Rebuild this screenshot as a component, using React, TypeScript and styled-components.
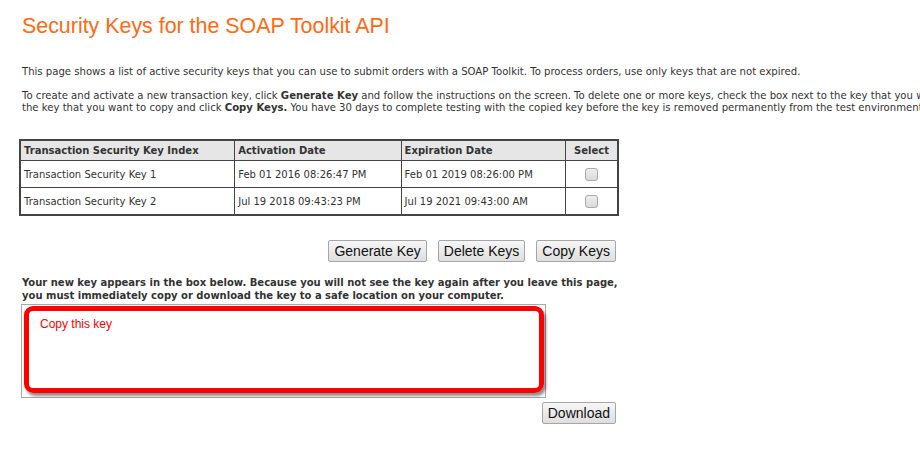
import React from "react";
import styled, { createGlobalStyle } from "styled-components";

const Global = createGlobalStyle`
  html, body { margin: 0; padding: 0; background: #fff; }
  body { font-family: "DejaVu Sans", Verdana, sans-serif; color: #333; }
`;

const Page = styled.div`
  padding: 13px 0 0 22px;
  width: 920px;
  box-sizing: border-box;
  overflow: hidden;
`;

const Title = styled.h1`
  margin: 0;
  font-family: "Liberation Sans", Arial, sans-serif;
  font-weight: normal;
  font-size: 21.4px;
  line-height: 26px;
  color: #ff6a13;
`;

const Para = styled.p<{ $top: number }>`
  margin: ${(p) => p.$top}px 0 0 0;
  font-size: 10.1px;
  line-height: 12px;
  white-space: nowrap;
  color: #333;
`;

const Table = styled.table`
  margin: 25px 0 0 -3px;
  border-collapse: collapse;
  border: 2px solid #444;
  width: 600px;
  font-size: 10px;
`;

const Th = styled.th<{ $w: number; $center?: boolean }>`
  width: ${(p) => p.$w}px;
  background: #e6e6e6;
  border: 1px solid #444;
  text-align: ${(p) => (p.$center ? "center" : "left")};
  padding: 0 3px;
  height: 19px;
  font-weight: bold;
  color: #333;
`;

const Td = styled.td<{ $center?: boolean }>`
  border: 1px solid #444;
  padding: 0 3px;
  height: 26px;
  text-align: ${(p) => (p.$center ? "center" : "left")};
  color: #333;
`;

const Check = styled.span`
  display: inline-block;
  width: 11px;
  height: 11px;
  border: 1px solid #aaa;
  border-radius: 3px;
  background: linear-gradient(#eee, #dadada);
  vertical-align: middle;
`;

const ButtonRow = styled.div<{ $top: number }>`
  display: flex;
  justify-content: flex-end;
  gap: 11px;
  width: 594px;
  margin-top: ${(p) => p.$top}px;
`;

const Button = styled.button`
  font-family: "Liberation Sans", Arial, sans-serif;
  font-size: 14px;
  color: #111;
  height: 22px;
  padding: 0 5px;
  border: 1px solid #a6a6a6;
  border-radius: 2px;
  background: linear-gradient(#f6f6f6, #dedede);
  line-height: 20px;
`;

const Notice = styled.p`
  margin: 14px 0 0 0;
  font-size: 10px;
  line-height: 13px;
  font-weight: bold;
  color: #333;
`;

const KeyBox = styled.div`
  margin: 2px 0 0 -1px;
  width: 525px;
  height: 94px;
  box-sizing: border-box;
  border: 1px solid #aaa;
  padding: 1px 1px 4px 2px;
`;

const Highlight = styled.div`
  width: 520px;
  height: 87px;
  box-sizing: border-box;
  border: 5px solid #ff0000;
  border-radius: 9px;
  box-shadow: 2px 3px 3px rgba(0, 0, 0, 0.45);
  padding: 6px 0 0 11px;
  font-family: "Liberation Sans", Tahoma, sans-serif;
  font-size: 12px;
  color: #ff0000;
`;

export default function App() {
  return (
    <>
      <Global />
      <Page>
        <Title>Security Keys for the SOAP Toolkit API</Title>
        <Para $top={27}>
          This page shows a list of active security keys that you can use to submit orders with a SOAP Toolkit. To process orders, use only keys that are not expired.
        </Para>
        <Para $top={12}>
          To create and activate a new transaction key, click <b>Generate Key</b> and follow the instructions on the screen. To delete one or more keys, check the box next to the key that you want to delete and click <b>Delete Keys</b>. To copy a key, check the box next to
          <br />
          the key that you want to copy and click <b>Copy Keys.</b> You have 30 days to complete testing with the copied key before the key is removed permanently from the test environment.
        </Para>
        <Table>
          <thead>
            <tr>
              <Th $w={208}>Transaction Security Key Index</Th>
              <Th $w={160}>Activation Date</Th>
              <Th $w={158}>Expiration Date</Th>
              <Th $w={45} $center>Select</Th>
            </tr>
          </thead>
          <tbody>
            <tr>
              <Td>Transaction Security Key 1</Td>
              <Td>Feb 01 2016 08:26:47 PM</Td>
              <Td>Feb 01 2019 08:26:00 PM</Td>
              <Td $center><Check /></Td>
            </tr>
            <tr>
              <Td>Transaction Security Key 2</Td>
              <Td>Jul 19 2018 09:43:23 PM</Td>
              <Td>Jul 19 2021 09:43:00 AM</Td>
              <Td $center><Check /></Td>
            </tr>
          </tbody>
        </Table>
        <ButtonRow $top={24}>
          <Button>Generate Key</Button>
          <Button>Delete Keys</Button>
          <Button>Copy Keys</Button>
        </ButtonRow>
        <Notice>
          Your new key appears in the box below. Because you will not see the key again after you leave this page,
          <br />
          you must immediately copy or download the key to a safe location on your computer.
        </Notice>
        <KeyBox>
          <Highlight>Copy this key</Highlight>
        </KeyBox>
        <ButtonRow $top={4}>
          <Button>Download</Button>
        </ButtonRow>
      </Page>
    </>
  );
}
